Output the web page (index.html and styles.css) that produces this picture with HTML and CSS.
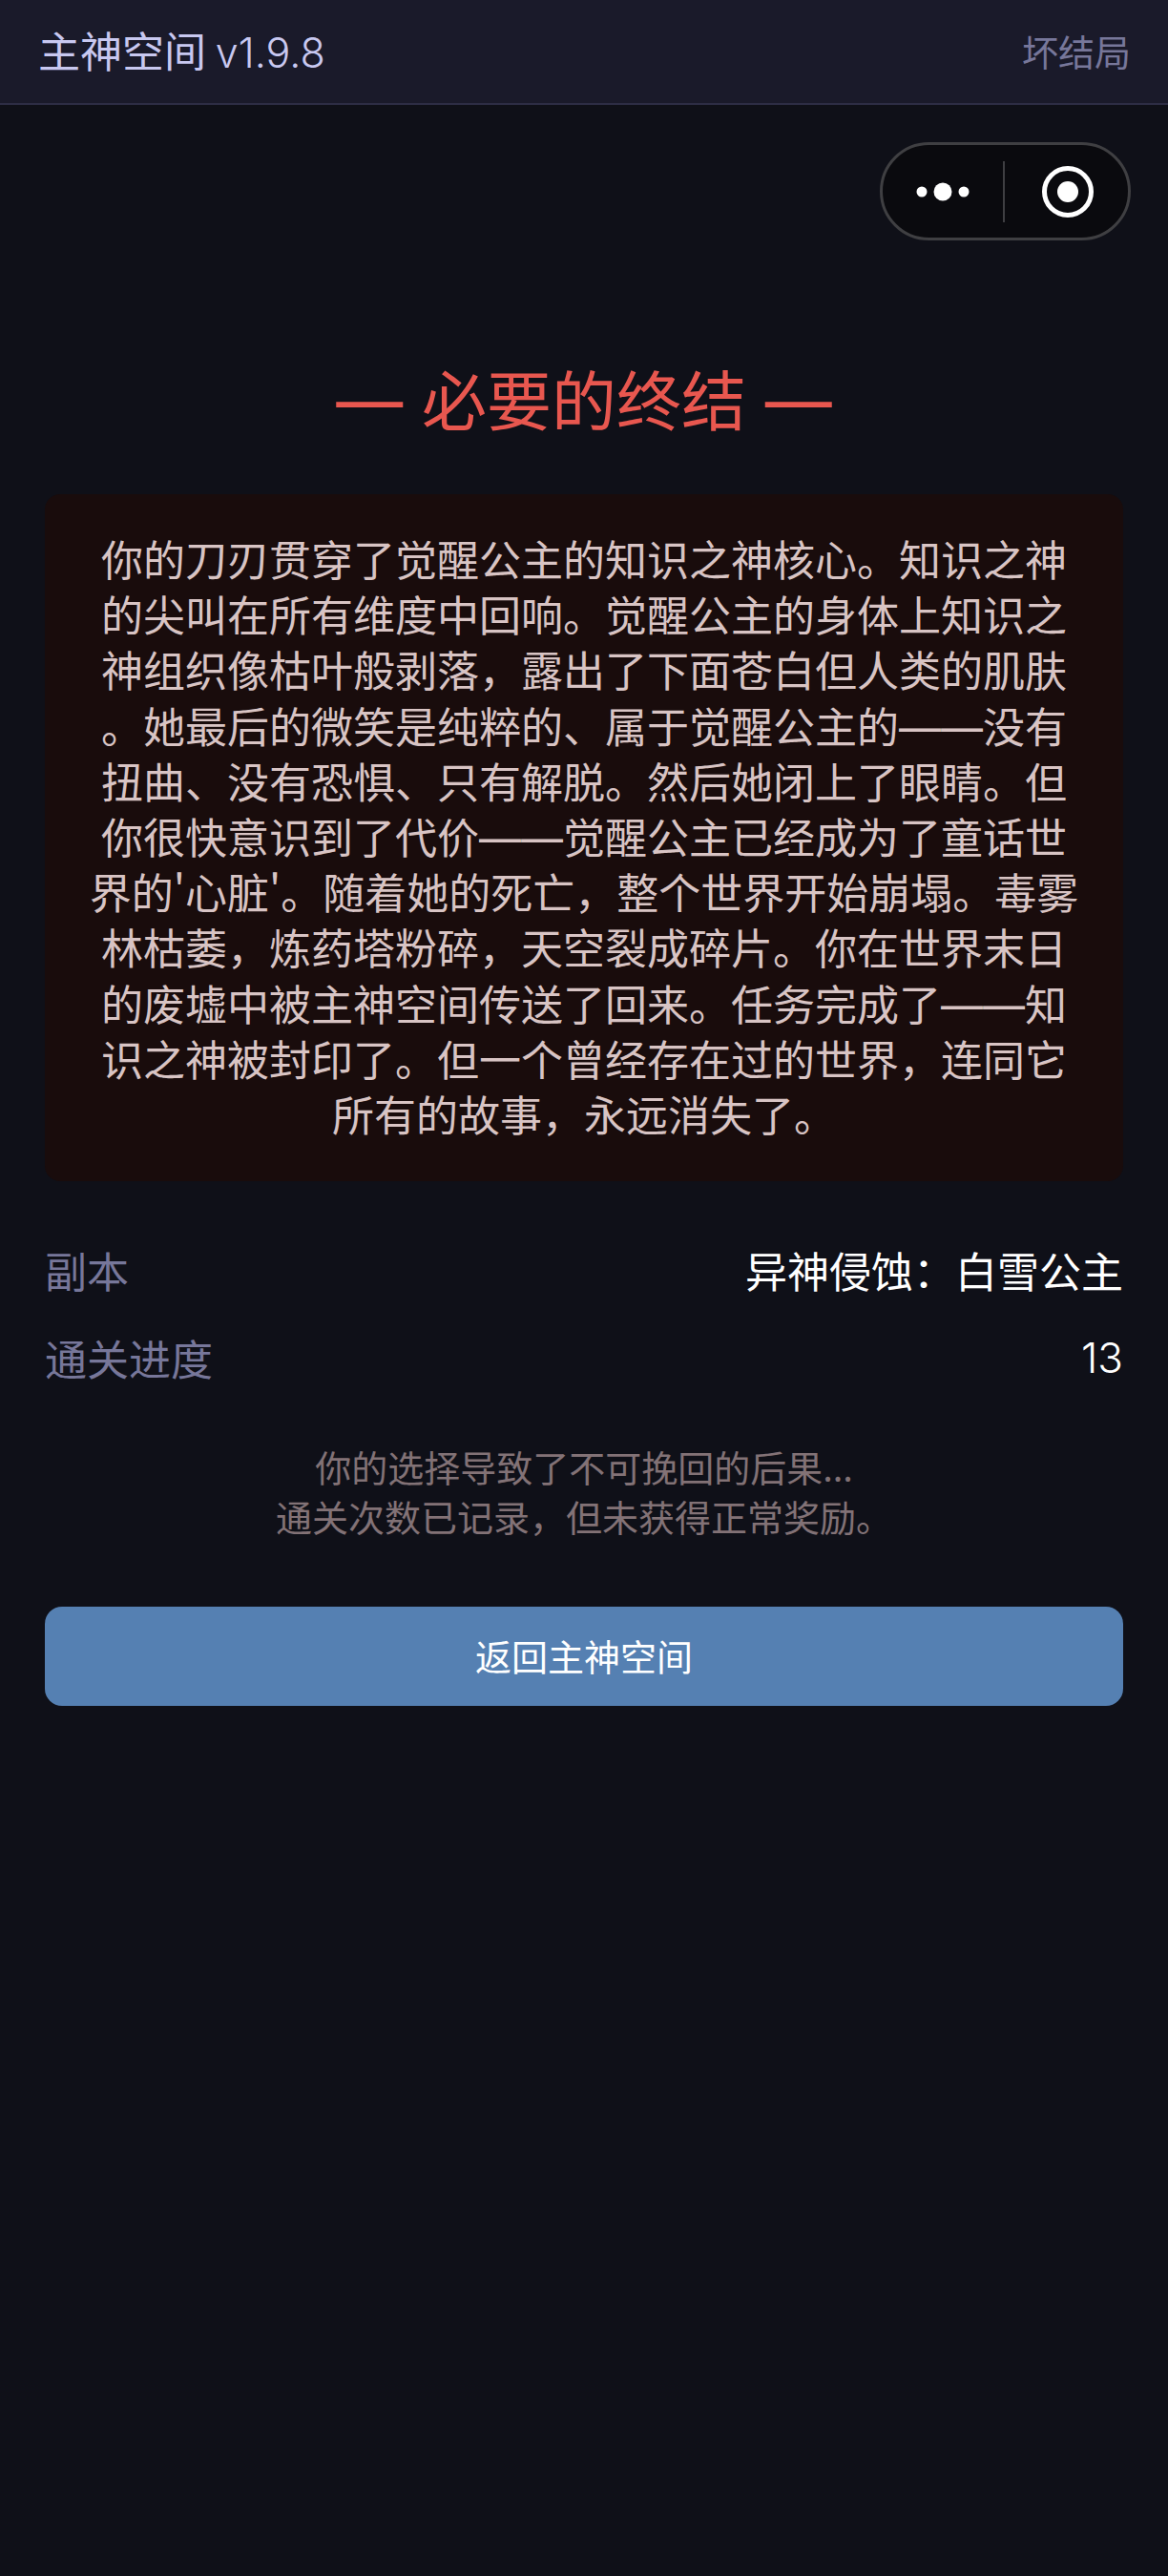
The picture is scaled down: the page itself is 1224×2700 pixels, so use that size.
FILE: index.html
```html
<!DOCTYPE html>
<html lang="zh-CN">
<head>
    <meta charset="UTF-8">
    <meta name="viewport" content="width=device-width, initial-scale=1.0">
    <title>主神空间</title>
    <link rel="stylesheet" href="styles.css">
</head>
<body>
    <div class="header">
        <span class="header-title">主神空间 <span class="version">v1.9.8</span></span>
        <span class="header-status">坏结局</span>
    </div>
    <div class="capsule">
        <div class="capsule-cell">
            <svg width="60" height="24" viewBox="0 0 60 24" fill="#fff">
                <circle cx="8" cy="12" r="5.5"/>
                <circle cx="30" cy="12" r="9.5"/>
                <circle cx="52" cy="12" r="5.5"/>
            </svg>
        </div>
        <div class="capsule-line"></div>
        <div class="capsule-cell capsule-target">
            <svg width="56" height="56" viewBox="0 0 56 56">
                <circle cx="28" cy="28" r="24.5" fill="none" stroke="#fff" stroke-width="5"/>
                <circle cx="28" cy="28" r="11" fill="#fff"/>
            </svg>
        </div>
    </div>
    <div class="main-container">
        <h1 class="ending-title"><span class="title-dash">— </span>必要的终结<span class="title-dash"> —</span></h1>
        <div class="story">
            <p>你的刀刃贯穿了觉醒公主的知识之神核心。知识之神</p>
            <p>的尖叫在所有维度中回响。觉醒公主的身体上知识之</p>
            <p>神组织像枯叶般剥落，露出了下面苍白但人类的肌肤</p>
            <p>。她最后的微笑是纯粹的、属于觉醒公主的<span class="dash">——</span>没有</p>
            <p>扭曲、没有恐惧、只有解脱。然后她闭上了眼睛。但</p>
            <p>你很快意识到了代价<span class="dash">——</span>觉醒公主已经成为了童话世</p>
            <p>界的'心脏'。随着她的死亡，整个世界开始崩塌。毒雾</p>
            <p>林枯萎，炼药塔粉碎，天空裂成碎片。你在世界末日</p>
            <p>的废墟中被主神空间传送了回来。任务完成了<span class="dash">——</span>知</p>
            <p>识之神被封印了。但一个曾经存在过的世界，连同它</p>
            <p>所有的故事，永远消失了。</p>
        </div>
        <div class="stat-row">
            <span class="stat-label">副本</span>
            <span class="stat-value">异神侵蚀：白雪公主</span>
        </div>
        <div class="stat-row">
            <span class="stat-label">通关进度</span>
            <span class="stat-value stat-number">13</span>
        </div>
        <div class="ending-note">
            <p>你的选择导致了不可挽回的后果...</p>
            <p>通关次数已记录，但未获得正常奖励。</p>
        </div>
        <button type="button" class="back-button">返回主神空间</button>
    </div>
</body>
</html>
```

FILE: styles.css
```css
body {
    margin: 0;
    padding: 0;
    background-color: #0f1018;
    font-family: "Noto Sans CJK SC", sans-serif;
}
p {
    margin: 0;
}
.header {
    display: flex;
    justify-content: space-between;
    align-items: center;
    box-sizing: border-box;
    height: 110px;
    padding: 0 39px 4px 40px;
    background-color: #1a1a2a;
    border-bottom: 2px solid #2d2d44;
}
.header-title {
    font-size: 44px;
    color: #c8c8f0;
}
.version {
    font-family: "Inter", sans-serif;
    font-size: 43px;
    font-weight: 350;
}
.header-status {
    font-size: 38px;
    color: #77779a;
}
.capsule {
    display: flex;
    align-items: center;
    box-sizing: border-box;
    width: 263px;
    height: 103px;
    margin: 39px 39px 0 auto;
    background-color: #0a0a0e;
    border: 3px solid #3f3f42;
    border-radius: 52px;
}
.capsule-cell {
    flex: 1;
    display: flex;
    justify-content: center;
    align-items: center;
}
.capsule-target {
    padding-left: 4px;
}
.capsule-line {
    width: 2px;
    height: 64px;
    background-color: #3f3f42;
}
.main-container {
    padding: 0 47px;
}
.ending-title {
    margin: 117px 0 0;
    font-size: 68px;
    font-weight: normal;
    line-height: 96px;
    text-align: center;
    color: #e8574f;
}
.title-dash {
    font-family: "Inter", sans-serif;
    font-size: 70px;
    line-height: 1;
}
.story {
    margin-top: 53px;
    padding: 38px 0 42px;
    background-color: #190c0c;
    border-radius: 16px;
    font-size: 44px;
    line-height: 58.2px;
    text-align: center;
    white-space: nowrap;
    color: #d8c4c4;
}
.dash {
    font-family: "Inter", sans-serif;
    line-height: 1;
}
.stat-row {
    display: flex;
    justify-content: space-between;
    align-items: center;
    box-sizing: border-box;
    height: 92px;
    padding-bottom: 4px;
    font-size: 44px;
}
.story + .stat-row {
    margin-top: 49px;
}
.stat-label {
    color: #77779a;
}
.stat-value {
    color: #fff;
}
.stat-number {
    font-family: "Inter", sans-serif;
    font-weight: 300;
}
.ending-note {
    margin-top: 40px;
    font-size: 38px;
    line-height: 52px;
    text-align: center;
    color: #827276;
}
.back-button {
    display: block;
    box-sizing: border-box;
    width: 100%;
    height: 104px;
    margin-top: 69px;
    padding: 0 0 4px;
    background-color: #5580b2;
    border: none;
    border-radius: 18px;
    font-family: inherit;
    font-size: 38px;
    color: #fff;
}
```
